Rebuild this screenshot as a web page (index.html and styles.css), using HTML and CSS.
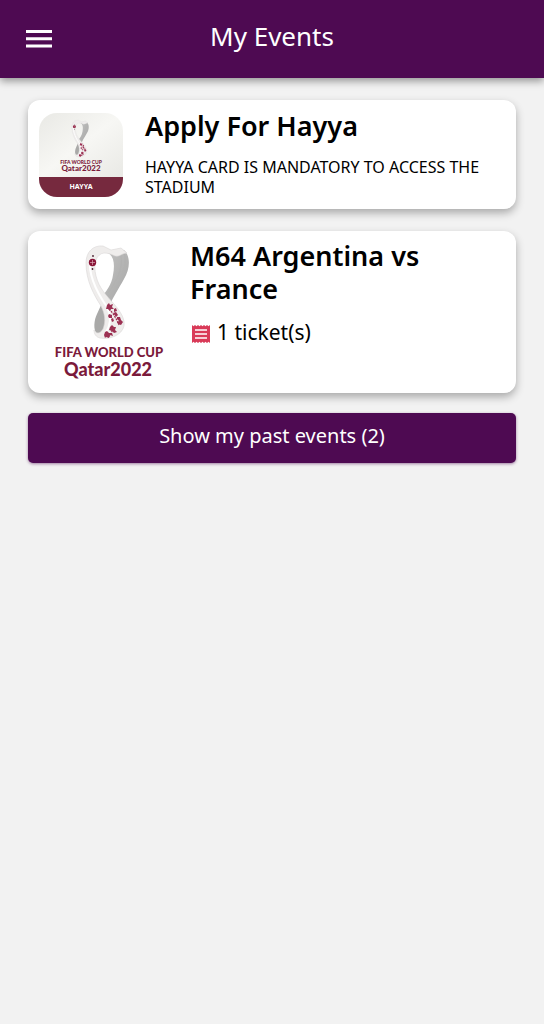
FILE: index.html
```
<!DOCTYPE html>
<html lang="en">
<head>
  <meta charset="utf-8">
  <meta name="viewport" content="width=device-width, initial-scale=1">
  <title>My Events</title>
  <link rel="stylesheet" href="styles.css">
</head>
<body>
  <!-- shared trophy drawing -->
  <svg class="sprite" aria-hidden="true">
    <defs>
      <linearGradient id="silver" x1="0" y1="0" x2="1" y2="1">
        <stop offset="0" stop-color="#c4c4c3"/>
        <stop offset="1" stop-color="#a6a6a6"/>
      </linearGradient>
    </defs>
    <symbol id="trophy" viewBox="44 8 48 98">
      <path fill="url(#silver)" d="M70 17 84 15C91 22 90 34 84 44C78 55 73 62 70 70L60 64C66 57 72 49 73 40C75 30 74 21 68 18Z"/>
      <path fill="#a9a9a8" d="M62 68C67 75 70 87 64 97C62 100 59 101 57 99C53 95 54 85 57 79Z"/>
      <path fill="none" stroke="#b2b2b1" d="M84 18C88 29 82 44 70 61M80 18C84 29 79 43 68 58"/>
      <path fill="#efedec" stroke="#dad7d6" stroke-width=".6" d="M46 28C46 17 53 10 63 11L71 15 81 13 87 18C82 18 80 22 75 21C71 19 68 18 64 18C56 19 53 29 56 41C59 53 66 60 74 69C81 77 85 84 84 91C82 100 70 105 60 103C56 102 54 99 54 95C56 99 60 99 63 94C66 86 65 79 61 71C54 60 46 46 46 28Z"/>
      <path fill="none" stroke="#fff" stroke-width="2" d="M50 24C48 42 58 59 67 72C71 80 71 90 65 99"/>
      <circle cx="52.5" cy="27.5" r="3.7" fill="#8a1538"/>
      <path stroke="#dcaab8" stroke-width=".7" d="M50 27.500h5M52.500 25v5"/>
      <circle cx="53" cy="21" r=".9" fill="#4b2230"/>
      <circle cx="52.500" cy="34" r=".9" fill="#4b2230"/>
      <g fill="#9c3153">
        <path d="m67 70 2-2 1 2 3-1-1 3 2 2-3 0-1 2-2-2-2 0zM74 74l2-1 1 3-3 1zM73 78l3-1 2 3-2 2zM69 79l3 1 0 3-3 0-1-2zM77 82l3 0 1 3 2 2-2 3-3-1-1-2 2-1-2-2zM71 84l2-1 1 3-2 1z"/>
        <path d="m69 95 1-3 2-2 2 2 2 0-1 3 2 2-3 1-2-2zM65 97l2-1 2 2 3 0 1 3-3-1-1 3-3-1-1 1-1-3z"/>
      </g>
      <path fill="none" stroke="#9c3153" stroke-width="1.200" stroke-dasharray="2 1" d="M69 74C73 78 76 83 79 90M72 95C72 98 71 100 68 102"/>
    </symbol>
  </svg>

  <header class="topbar">
    <button type="button" class="menu-btn" aria-label="Menu">
      <svg viewBox="0 0 26 18" width="26" height="18"><path fill="#fff" d="M0 0h26v3H0zM0 7.300h26v3H0zM0 14.600h26v3H0z"/></svg>
    </button>
    <h1>My Events</h1>
  </header>

  <main class="content">
    <section class="card hayya-card">
      <svg class="hayya-icon" viewBox="0 0 84 84" role="img" aria-label="Hayya">
        <defs>
          <linearGradient id="paper" x1="0" y1="0" x2="1" y2="1">
            <stop offset="0" stop-color="#e9e9e5"/>
            <stop offset=".5" stop-color="#f7f7f4"/>
            <stop offset="1" stop-color="#e9e9e5"/>
          </linearGradient>
        </defs>
        <rect width="84" height="64" fill="url(#paper)"/>
        <rect y="64" width="84" height="20" fill="#76293e"/>
        <use href="#trophy" x="32" y="6" width="19" height="39"/>
        <text class="logo-text" x="42" y="51" font-size="5">FIFA WORLD CUP</text>
        <text class="logo-text" x="42" y="58" font-size="8">Qatar2022</text>
        <text class="hayya-text" x="42" y="76" font-size="7">HAYYA</text>
      </svg>
      <div class="card-body">
        <h2>Apply For Hayya</h2>
        <p class="note">HAYYA CARD IS MANDATORY TO ACCESS THE STADIUM</p>
      </div>
    </section>

    <section class="card match-card">
      <svg class="match-logo" viewBox="0 4 140 142" role="img" aria-label="FIFA World Cup Qatar 2022">
        <use href="#trophy" x="44" y="8" width="48" height="98"/>
        <text class="logo-text" x="69" y="122" font-size="13">FIFA WORLD CUP</text>
        <text class="logo-text" x="68" y="141" font-size="18">Qatar2022</text>
      </svg>
      <div class="card-body">
        <h2>M64 Argentina vs France</h2>
        <p class="tickets">
          <svg viewBox="0 0 18 18" width="18" height="18" aria-hidden="true">
            <path fill="#d93a58" d="M0 0l1.500 1.200L3 0l1.500 1.200L6 0l1.500 1.200L9 0l1.500 1.200L12 0l1.500 1.200L15 0l1.500 1.200L18 0v18l-1.500-1.200L15 18l-1.500-1.200L12 18l-1.500-1.200L9 18l-1.500-1.200L6 18l-1.500-1.200L3 18l-1.500-1.200L0 18z"/>
            <path fill="#fff" d="M3 4.200h12v1.500H3zM3 8.200h12v1.500H3zM3 12.200h12v1.500H3z"/>
          </svg>
          <span>1 ticket(s)</span>
        </p>
      </div>
    </section>

    <button type="button" class="past-btn">Show my past events (2)</button>
  </main>
</body>
</html>
```
FILE: styles.css
```
* {
  box-sizing: border-box;
}
body {
  margin: 0;
  min-height: 100vh;
  background-color: #f2f2f2;
  font-family: "Noto Sans", sans-serif;
  color: #000;
}
h1, h2, p {
  margin: 0;
}
button {
  border: none;
  font-family: inherit;
  cursor: pointer;
}
.sprite {
  position: absolute;
  width: 0;
  height: 0;
}
.topbar {
  display: grid;
  grid-template-columns: 78px 1fr 78px;
  align-items: center;
  height: 78px;
  background-color: #4e0a52;
  color: #fff;
  box-shadow: 0 3px 8px rgba(0, 0, 0, 0.4);
}
.topbar h1 {
  padding-bottom: 6px;
  font-size: 26px;
  font-weight: 400;
  line-height: 36px;
  text-align: center;
}
.menu-btn {
  display: flex;
  justify-content: center;
  padding: 16px;
  background: none;
}
.content {
  padding: 22px 28px;
}
.card {
  display: flex;
  align-items: flex-start;
  margin-bottom: 22px;
  border-radius: 12px;
  background-color: #fff;
  box-shadow: 0 4px 8px rgba(0, 0, 0, 0.3);
}
.card-body {
  flex: 1;
  min-width: 0;
}
.card h2 {
  font-size: 27px;
  font-weight: 600;
  line-height: 33px;
}
.hayya-card {
  gap: 22px;
  padding: 9px 11px 12px;
}
.hayya-icon {
  width: 84px;
  height: 84px;
  margin-top: 4px;
  border-radius: 18px;
}
.note {
  margin-top: 15px;
  font-size: 16px;
  line-height: 20px;
}
.match-card {
  gap: 10px;
  margin-bottom: 20px;
  padding: 8px 12px 12px;
}
.match-logo {
  width: 140px;
  height: 142px;
}
.tickets {
  display: flex;
  align-items: center;
  gap: 7px;
  margin-top: 12px;
  padding-left: 2px;
  font-size: 21px;
  line-height: 30px;
}
.tickets svg {
  margin-top: 4px;
}
.logo-text {
  fill: #7b1a3b;
  font-family: "Lato", sans-serif;
  font-weight: 900;
  text-anchor: middle;
}
.hayya-text {
  fill: #fff;
  font-weight: 700;
  text-anchor: middle;
}
.past-btn {
  display: block;
  width: 100%;
  padding: 8px 12px 12px;
  border-radius: 5px;
  background-color: #4e0a52;
  box-shadow: 0 1px 3px rgba(78, 10, 82, 0.5);
  color: #fff;
  font-size: 20px;
  line-height: 30px;
}
```
